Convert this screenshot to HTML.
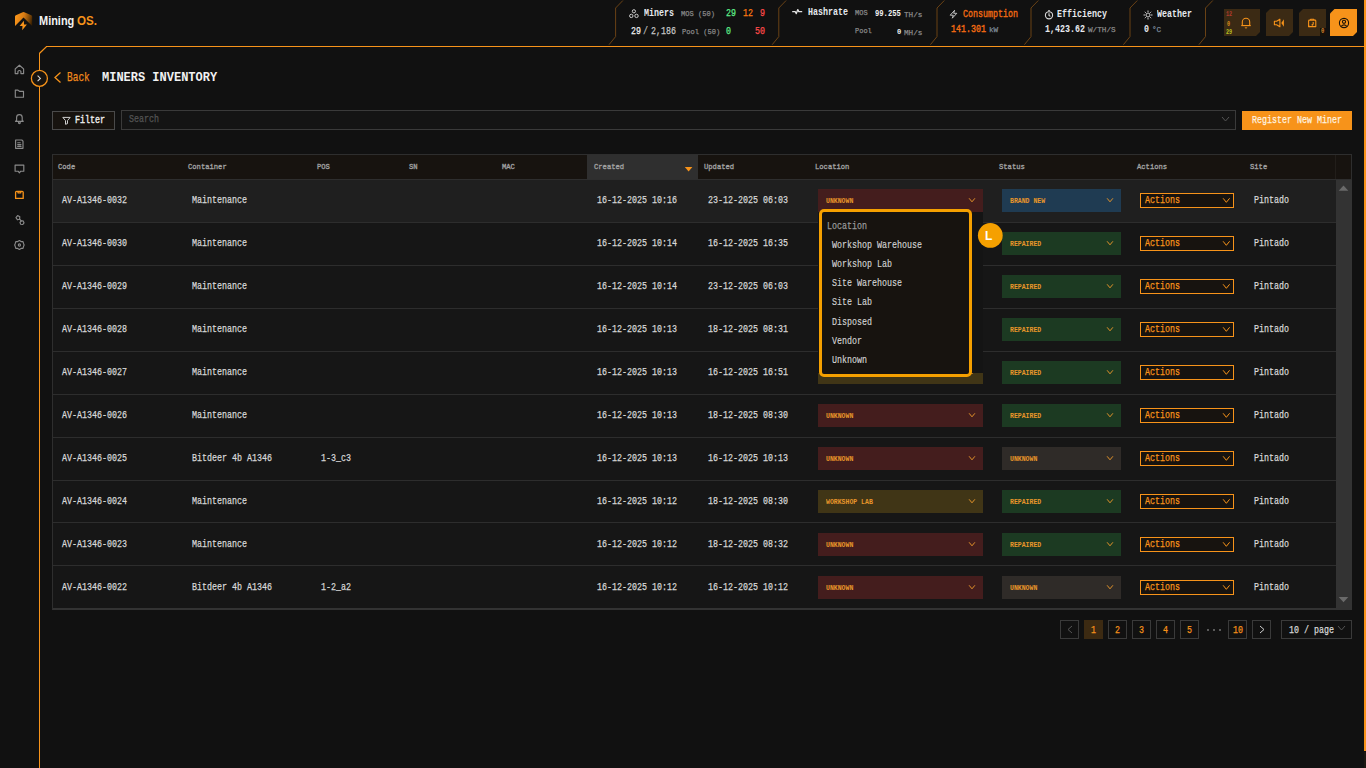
<!DOCTYPE html><html><head><meta charset="utf-8"><style>
html,body{margin:0;padding:0;}
body{width:1366px;height:768px;overflow:hidden;position:relative;background:#111111;font-family:"Liberation Mono",monospace;}
.t{position:absolute;white-space:pre;line-height:1;transform-origin:0 0;}
.r{position:absolute;box-sizing:border-box;}
</style></head><body>
<svg class="r" style="left:13px;top:10px;" width="22" height="22" viewBox="0 0 22 22"><defs><linearGradient id="lg" x1="0" y1="0.75" x2="1" y2="0.95"><stop offset="0" stop-color="#f7931a"/><stop offset="0.4" stop-color="#d87c14"/><stop offset="0.75" stop-color="#7a4608"/><stop offset="1" stop-color="#2a1700"/></linearGradient></defs>
<path d="M2 16 V6.6 Q2 5.7 2.9 5.3 L9.7 2.2 Q10.5 1.8 11.3 2.2 L18.3 5.3 Q19.2 5.7 19.2 6.6 V16 L10.5 7.5 Z" fill="url(#lg)"/>
<path d="M10.9 10.7 L6.6 15.9 L9.5 15.9 L9.2 20.3 L13.9 14.4 L11 14.4 Z" fill="#f7931a"/></svg>
<div class="t" style="left:39.00px;top:15.35px;font-size:12.60px;color:#f2f2f2;font-weight:700;transform:scaleX(0.870);font-family:'Liberation Sans',sans-serif;">Mining</div>
<div class="t" style="left:77.00px;top:15.35px;font-size:12.60px;color:#f7931a;font-weight:700;transform:scaleX(0.920);font-family:'Liberation Sans',sans-serif;">OS.</div>
<svg class="r" style="left:0px;top:0px;" width="1366" height="46" viewBox="0 0 1366 46"><path d="M622.9 0.5 L615.6 8 L615.6 36.6 L609.0 44.7" fill="none" stroke="#6a4215" stroke-width="1.0"/><path d="M786.0999999999999 0.5 L778.8 8 L778.8 36.6 L772.1999999999999 44.7" fill="none" stroke="#6a4215" stroke-width="1.0"/><path d="M944.3 0.5 L937 8 L937 36.6 L930.4 44.7" fill="none" stroke="#6a4215" stroke-width="1.0"/><path d="M1038.3 0.5 L1031 8 L1031 36.6 L1024.4 44.7" fill="none" stroke="#6a4215" stroke-width="1.0"/><path d="M1137.3 0.5 L1130 8 L1130 36.6 L1123.4 44.7" fill="none" stroke="#6a4215" stroke-width="1.0"/><path d="M1212.8 0.5 L1205.5 8 L1205.5 36.6 L1198.9 44.7" fill="none" stroke="#6a4215" stroke-width="1.0"/></svg>
<div class="r" style="left:46px;top:46px;width:1320px;height:1.3px;background:#f7931a"></div>
<div class="r" style="left:1364px;top:0px;width:2px;height:751px;background:#f7931a"></div>
<div class="r" style="left:1364px;top:752px;width:2px;height:16px;background:#1c1812"></div>
<div class="r" style="left:38.7px;top:53px;width:1.3px;height:715px;background:#f7931a"></div>
<svg class="r" style="left:36px;top:44px;" width="14" height="12" viewBox="0 0 14 12"><path d="M3.35 9.5 L10.5 2.6" stroke="#f7931a" stroke-width="1.3" fill="none"/></svg>
<svg class="r" style="left:627px;top:7px;" width="14" height="13" viewBox="0 0 14 13"><g fill="none" stroke="#cfcfcf" stroke-width="1"><circle cx="6.9" cy="4.3" r="1.6"/><circle cx="4.3" cy="8.9" r="1.7"/><circle cx="9.5" cy="8.9" r="1.7"/></g></svg>
<div class="t" style="left:644.20px;top:7.61px;font-size:11.08px;color:#e6e9ee;font-weight:700;transform:scaleX(0.752);font-family:'Liberation Mono',monospace;">Miners</div>
<div class="t" style="left:681.40px;top:9.74px;font-size:8.05px;color:#8a8a8a;font-weight:400;transform:scaleX(0.880);font-family:'Liberation Mono',monospace;-webkit-text-stroke:0.25px currentColor;">MOS (50)</div>
<div class="t" style="left:725.50px;top:7.86px;font-size:10.63px;color:#5ff08a;font-weight:400;transform:scaleX(0.784);font-family:'Liberation Mono',monospace;-webkit-text-stroke:0.25px currentColor;">29</div>
<div class="t" style="left:743.00px;top:7.86px;font-size:10.63px;color:#ff7a10;font-weight:400;transform:scaleX(0.784);font-family:'Liberation Mono',monospace;-webkit-text-stroke:0.25px currentColor;">12</div>
<div class="t" style="left:760.00px;top:7.86px;font-size:10.63px;color:#ff4a4a;font-weight:400;transform:scaleX(0.784);font-family:'Liberation Mono',monospace;-webkit-text-stroke:0.25px currentColor;">9</div>
<div class="t" style="left:630.60px;top:25.51px;font-size:11.08px;color:#f4f4f4;font-weight:400;transform:scaleX(0.752);font-family:'Liberation Mono',monospace;-webkit-text-stroke:0.25px currentColor;">29</div>
<div class="t" style="left:643.00px;top:25.51px;font-size:11.08px;color:#b8b8b8;font-weight:400;transform:scaleX(0.752);font-family:'Liberation Mono',monospace;-webkit-text-stroke:0.25px currentColor;">/</div>
<div class="t" style="left:650.80px;top:25.51px;font-size:11.08px;color:#c8c8c8;font-weight:400;transform:scaleX(0.752);font-family:'Liberation Mono',monospace;-webkit-text-stroke:0.25px currentColor;">2,186</div>
<div class="t" style="left:681.60px;top:28.14px;font-size:8.05px;color:#8a8a8a;font-weight:400;transform:scaleX(0.880);font-family:'Liberation Mono',monospace;-webkit-text-stroke:0.25px currentColor;">Pool (50)</div>
<div class="t" style="left:725.50px;top:25.86px;font-size:10.63px;color:#5ff08a;font-weight:400;transform:scaleX(0.784);font-family:'Liberation Mono',monospace;-webkit-text-stroke:0.25px currentColor;">0</div>
<div class="t" style="left:754.60px;top:25.86px;font-size:10.63px;color:#ff4a4a;font-weight:400;transform:scaleX(0.784);font-family:'Liberation Mono',monospace;-webkit-text-stroke:0.25px currentColor;">50</div>
<svg class="r" style="left:790px;top:6px;" width="14" height="12" viewBox="0 0 14 12"><path d="M2.2 5.6 H5.2 L6.3 7.6 L7.8 3.6 L8.8 5.6 H12.2" fill="none" stroke="#e0e0e0" stroke-width="1.3" stroke-linejoin="round"/></svg>
<div class="t" style="left:808.00px;top:6.79px;font-size:11.23px;color:#e6e9ee;font-weight:700;transform:scaleX(0.742);font-family:'Liberation Mono',monospace;">Hashrate</div>
<div class="t" style="left:855.00px;top:10.22px;font-size:7.29px;color:#8a8a8a;font-weight:400;transform:scaleX(0.961);font-family:'Liberation Mono',monospace;-webkit-text-stroke:0.25px currentColor;">MOS</div>
<div class="t" style="left:875.00px;top:9.60px;font-size:8.35px;color:#f2f2f2;font-weight:700;transform:scaleX(0.858);font-family:'Liberation Mono',monospace;">99.255</div>
<div class="t" style="left:904.30px;top:11.14px;font-size:8.05px;color:#8a8a8a;font-weight:400;transform:scaleX(0.953);font-family:'Liberation Mono',monospace;-webkit-text-stroke:0.25px currentColor;">TH/s</div>
<div class="t" style="left:855.00px;top:28.38px;font-size:7.59px;color:#8a8a8a;font-weight:400;transform:scaleX(0.922);font-family:'Liberation Mono',monospace;-webkit-text-stroke:0.25px currentColor;">Pool</div>
<div class="t" style="left:896.60px;top:29.18px;font-size:7.59px;color:#f2f2f2;font-weight:700;transform:scaleX(0.944);font-family:'Liberation Mono',monospace;">0</div>
<div class="t" style="left:904.30px;top:29.14px;font-size:8.05px;color:#8a8a8a;font-weight:400;transform:scaleX(0.953);font-family:'Liberation Mono',monospace;-webkit-text-stroke:0.25px currentColor;">MH/s</div>
<svg class="r" style="left:948px;top:9px;" width="11" height="11" viewBox="0 0 11 11"><path d="M6.6 1.3 L2.2 6.2 L5.3 6.2 L4.3 9.2 L8.8 4.3 L5.7 4.3 Z" fill="none" stroke="#d0d0d0" stroke-width="0.9" stroke-linejoin="round"/></svg>
<div class="t" style="left:962.50px;top:9.29px;font-size:10.32px;color:#f26b12;font-weight:400;transform:scaleX(0.807);font-family:'Liberation Mono',monospace;-webkit-text-stroke:0.35px currentColor;">Consumption</div>
<div class="t" style="left:951.00px;top:23.73px;font-size:10.93px;color:#f26b12;font-weight:400;transform:scaleX(0.762);font-family:'Liberation Mono',monospace;-webkit-text-stroke:0.4px currentColor;">141.301</div>
<div class="t" style="left:988.90px;top:26.14px;font-size:8.05px;color:#7d8a99;font-weight:400;transform:scaleX(0.953);font-family:'Liberation Mono',monospace;-webkit-text-stroke:0.25px currentColor;">kW</div>
<svg class="r" style="left:1044px;top:10px;" width="10" height="10" viewBox="0 0 10 10"><g fill="none" stroke="#d8d8d8" stroke-width="1.1"><circle cx="5" cy="5.3" r="3.6"/><path d="M5 3.3 L5 5.4 L6.4 6.4"/><path d="M4 0.8 L6 0.8"/></g></svg>
<div class="t" style="left:1057.40px;top:9.29px;font-size:10.32px;color:#e6e9ee;font-weight:700;transform:scaleX(0.807);font-family:'Liberation Mono',monospace;">Efficiency</div>
<div class="t" style="left:1045.00px;top:24.01px;font-size:11.08px;color:#e6e9ee;font-weight:700;transform:scaleX(0.752);font-family:'Liberation Mono',monospace;">1,423.62</div>
<div class="t" style="left:1088.00px;top:26.14px;font-size:8.05px;color:#8a8a8a;font-weight:400;transform:scaleX(0.953);font-family:'Liberation Mono',monospace;-webkit-text-stroke:0.25px currentColor;">W/TH/S</div>
<svg class="r" style="left:1143px;top:10px;" width="10" height="10" viewBox="0 0 10 10"><g fill="none" stroke="#cfcfcf" stroke-width="1"><circle cx="5" cy="5" r="2"/><path d="M5 0.5V2 M5 8V9.5 M0.5 5H2 M8 5H9.5 M1.8 1.8L2.8 2.8 M7.2 7.2L8.2 8.2 M1.8 8.2L2.8 7.2 M7.2 2.8L8.2 1.8"/></g></svg>
<div class="t" style="left:1157.00px;top:9.49px;font-size:10.32px;color:#e6e9ee;font-weight:700;transform:scaleX(0.807);font-family:'Liberation Mono',monospace;">Weather</div>
<div class="t" style="left:1144.00px;top:24.09px;font-size:10.32px;color:#e6e9ee;font-weight:700;transform:scaleX(0.807);font-family:'Liberation Mono',monospace;">0</div>
<div class="t" style="left:1152.40px;top:25.64px;font-size:8.05px;color:#7d8a99;font-weight:400;transform:scaleX(0.953);font-family:'Liberation Mono',monospace;-webkit-text-stroke:0.25px currentColor;">°C</div>
<svg class="r" style="left:1224px;top:9px;" width="36" height="27" viewBox="0 0 36 27"><polygon points="0,0 36,0 36,23 32,27 0,27 0,0" fill="#3b2a14"/></svg>
<div class="t" style="left:1225.80px;top:12.32px;font-size:6.38px;color:#b03a2e;font-weight:700;transform:scaleX(0.810);font-family:'Liberation Mono',monospace;">12</div>
<div class="t" style="left:1227.30px;top:21.52px;font-size:6.38px;color:#d88a1a;font-weight:700;transform:scaleX(0.810);font-family:'Liberation Mono',monospace;">0</div>
<div class="t" style="left:1225.80px;top:29.52px;font-size:6.38px;color:#b8c020;font-weight:700;transform:scaleX(0.810);font-family:'Liberation Mono',monospace;">29</div>
<svg class="r" style="left:1240px;top:16px;" width="12" height="13" viewBox="0 0 12 13"><g fill="none" stroke="#f7931a" stroke-width="1.1"><path d="M2.3 9.5 V6 A3.7 3.7 0 0 1 9.7 6 V9.5 Z"/><path d="M1.3 9.6 H10.7"/><path d="M5 11.5 Q6 12.6 7 11.5"/></g></svg>
<svg class="r" style="left:1266px;top:9px;" width="27" height="27" viewBox="0 0 27 27"><polygon points="4,0 27,0 27,23 23,27 0,27 0,4" fill="#3b2a14"/></svg>
<svg class="r" style="left:1272px;top:17px;" width="14" height="12" viewBox="0 0 14 12"><g fill="none" stroke="#f7931a" stroke-width="1.1" stroke-linejoin="round"><path d="M2.4 4.3 H4.6 L7.9 2.2 V9.8 L4.6 7.7 H2.4 Z"/></g><path d="M9.3 6 L11.9 2.3 V9.7 Z" fill="#f7931a"/></svg>
<svg class="r" style="left:1299px;top:9px;" width="27" height="27" viewBox="0 0 27 27"><polygon points="4,0 27,0 27,27 27,27 0,27 0,4" fill="#3b2a14"/></svg>
<svg class="r" style="left:1306px;top:17px;" width="12" height="12" viewBox="0 0 12 12"><g fill="none" stroke="#f7931a" stroke-width="1.1" stroke-linejoin="round"><path d="M2.6 4 Q2.6 3.1 3.5 3.1 H9 Q9.8 3.1 9.8 4 V9.6 H2.6 Z"/><path d="M4.6 3 V2.2 H7.8 V3"/><path d="M7.2 5 V7.6"/></g><circle cx="6.4" cy="7.8" r="0.9" fill="#f7931a"/><circle cx="3" cy="9.4" r="0.8" fill="#f7931a"/></svg>
<div class="r" style="left:1320px;top:28px;width:6px;height:8px;background:#17110a"></div>
<div class="t" style="left:1321.20px;top:29.32px;font-size:6.38px;color:#d0802a;font-weight:700;transform:scaleX(0.863);font-family:'Liberation Mono',monospace;">0</div>
<svg class="r" style="left:1330px;top:9px;" width="27" height="27" viewBox="0 0 27 27"><polygon points="4.5,0 27,0 27,23 23,27 0,27 0,4.5" fill="#f7931a"/></svg>
<svg class="r" style="left:1338px;top:17px;" width="12" height="12" viewBox="0 0 12 12"><g fill="none" stroke="#1a1208" stroke-width="1.1"><circle cx="6" cy="6" r="4.6"/><circle cx="6" cy="4.8" r="1.6"/><path d="M3.1 9.4 Q6 6.4 8.9 9.4"/></g></svg>
<svg class="r" style="left:0px;top:0px;" width="40" height="260" viewBox="0 0 40 260"><g fill="none" stroke="#8a8a8a" stroke-width="1.15" stroke-linejoin="round" stroke-linecap="round">
<path d="M15.2 73.6 V68.9 L19.4 65.2 L23.6 68.9 V73.6 H20.9 V71.3 Q19.4 69.6 17.9 71.3 V73.6 Z"/>
<path d="M15.3 97.2 V90.1 H18 L19.4 91.3 H23.5 V97.2 Z"/>
<path d="M16.6 120.6 V117.6 A2.8 2.9 0 0 1 22.2 117.6 V120.6 L23.3 121.3 H15.5 Z"/>
<circle cx="19.4" cy="122.7" r="0.9"/>
<path d="M15.6 140 H21.8 L23 141.2 V148.3 H15.6 Z"/>
<path d="M17.7 142.7 H20.3 M17.7 144.6 H21 M17.7 146.4 H21"/>
<path d="M15.1 165.1 H23.8 V171.2 H20.7 L19.4 172.9 L18.1 171.2 H15.1 Z"/>

<circle cx="19.4" cy="245" r="1.1"/>
<path d="M19.4 240.6 L21.1 241.6 L23 241.6 L23.5 243.4 L24.1 245 L23.5 246.6 L23 248.4 L21.1 248.4 L19.4 249.4 L17.7 248.4 L15.8 248.4 L15.3 246.6 L14.7 245 L15.3 243.4 L15.8 241.6 L17.7 241.6 Z" />
<path d="M16 217.6 L17.6 215.6 L19.8 216.8 L19.6 219.2 L17.4 219.8 Z"/>
<path d="M19.6 219.2 L21.4 221"/>
<path d="M21 221 L23 220.8 L24 222.8 L22.8 224.5 L20.6 224.2 L20 222.3 Z"/>
</g>
<g fill="none" stroke="#f7931a" stroke-width="1.3" stroke-linejoin="round">
<path d="M15.6 192.3 Q15.6 191.3 16.6 191.3 H22.2 Q23.2 191.3 23.2 192.3 V198.4 H15.6 Z"/>
<path d="M18 191.3 V192.8 H20.8 V191.3"/>
</g></svg>
<svg class="r" style="left:29px;top:68px;" width="21" height="21" viewBox="0 0 21 21"><circle cx="10.4" cy="10.4" r="8" fill="#17130f" stroke="#f7931a" stroke-width="1.3"/><path d="M8.6 7.6 L11.4 10.4 L8.6 13.2" fill="none" stroke="#d8d8d8" stroke-width="1.1"/></svg>
<svg class="r" style="left:52px;top:70px;" width="12" height="14" viewBox="0 0 12 14"><path d="M8.5 2.5 L3 7.5 L8.5 12.5" fill="none" stroke="#f7931a" stroke-width="1.3"/></svg>
<div class="t" style="left:66.80px;top:71.55px;font-size:12.60px;color:#f08a1c;font-weight:400;transform:scaleX(0.754);font-family:'Liberation Mono',monospace;-webkit-text-stroke:0.25px currentColor;">Back</div>
<div class="t" style="left:101.50px;top:71.55px;font-size:12.60px;color:#f2f2f2;font-weight:700;transform:scaleX(0.952);font-family:'Liberation Mono',monospace;">MINERS INVENTORY</div>
<div class="r" style="left:52px;top:111px;width:63px;height:19px;background:#17130f;border:1px solid #4a4a4a"></div>
<svg class="r" style="left:61px;top:114px;" width="11" height="12" viewBox="0 0 11 12"><g fill="none" stroke="#d0d0d0" stroke-width="1"><path d="M1.8 3.4 H9.2 L6.5 6.6 V9.6 L4.5 10.3 V6.6 Z"/></g></svg>
<div class="t" style="left:74.70px;top:114.86px;font-size:10.63px;color:#ececec;font-weight:400;transform:scaleX(0.784);font-family:'Liberation Mono',monospace;-webkit-text-stroke:0.4px currentColor;">Filter</div>
<div class="r" style="left:121px;top:110px;width:1115px;height:20px;background:#141414;border:1px solid #3a3a3a"></div>
<div class="t" style="left:128.90px;top:114.06px;font-size:10.63px;color:#555555;font-weight:400;transform:scaleX(0.784);font-family:'Liberation Mono',monospace;-webkit-text-stroke:0.25px currentColor;">Search</div>
<svg class="r" style="left:1221px;top:115px;" width="9" height="8" viewBox="0 0 9 8"><path d="M1 2 L4.5 6 L8 2" fill="none" stroke="#555" stroke-width="1"/></svg>
<div class="r" style="left:1242px;top:111px;width:110px;height:19px;background:#f7931a"></div>
<div class="t" style="left:1251.60px;top:114.96px;font-size:10.63px;color:#fff3e0;font-weight:400;transform:scaleX(0.784);font-family:'Liberation Mono',monospace;-webkit-text-stroke:0.25px currentColor;">Register New Miner</div>
<div class="r" style="left:52px;top:154px;width:1300px;height:456px;border:1px solid #2e2e2e;border-bottom:2px solid #333;background:#161616"></div>
<div class="r" style="left:53px;top:155px;width:1298px;height:24px;background:#17130f"></div>
<div class="r" style="left:587px;top:155px;width:111px;height:24px;background:#2f2f2f"></div>
<div class="r" style="left:53px;top:179px;width:1298px;height:1px;background:#2e2e2e"></div>
<div class="r" style="left:1335px;top:155px;width:1px;height:24px;background:#221e1a"></div>
<svg class="r" style="left:684px;top:166px;" width="10" height="7" viewBox="0 0 10 7"><path d="M0.8 0.9 H8.4 L4.6 5.4 Z" fill="#f7931a"/></svg>
<div class="t" style="left:58.40px;top:162.84px;font-size:8.05px;color:#a0a0a0;font-weight:400;transform:scaleX(0.891);font-family:'Liberation Mono',monospace;-webkit-text-stroke:0.35px currentColor;">Code</div>
<div class="t" style="left:188.20px;top:162.84px;font-size:8.05px;color:#a0a0a0;font-weight:400;transform:scaleX(0.891);font-family:'Liberation Mono',monospace;-webkit-text-stroke:0.35px currentColor;">Container</div>
<div class="t" style="left:317.00px;top:162.84px;font-size:8.05px;color:#a0a0a0;font-weight:400;transform:scaleX(0.891);font-family:'Liberation Mono',monospace;-webkit-text-stroke:0.35px currentColor;">POS</div>
<div class="t" style="left:409.00px;top:162.84px;font-size:8.05px;color:#a0a0a0;font-weight:400;transform:scaleX(0.891);font-family:'Liberation Mono',monospace;-webkit-text-stroke:0.35px currentColor;">SN</div>
<div class="t" style="left:501.50px;top:162.84px;font-size:8.05px;color:#a0a0a0;font-weight:400;transform:scaleX(0.891);font-family:'Liberation Mono',monospace;-webkit-text-stroke:0.35px currentColor;">MAC</div>
<div class="t" style="left:593.80px;top:162.84px;font-size:8.05px;color:#a0a0a0;font-weight:400;transform:scaleX(0.891);font-family:'Liberation Mono',monospace;-webkit-text-stroke:0.35px currentColor;">Created</div>
<div class="t" style="left:704.00px;top:162.84px;font-size:8.05px;color:#a0a0a0;font-weight:400;transform:scaleX(0.891);font-family:'Liberation Mono',monospace;-webkit-text-stroke:0.35px currentColor;">Updated</div>
<div class="t" style="left:815.00px;top:162.84px;font-size:8.05px;color:#a0a0a0;font-weight:400;transform:scaleX(0.891);font-family:'Liberation Mono',monospace;-webkit-text-stroke:0.35px currentColor;">Location</div>
<div class="t" style="left:998.80px;top:162.84px;font-size:8.05px;color:#a0a0a0;font-weight:400;transform:scaleX(0.891);font-family:'Liberation Mono',monospace;-webkit-text-stroke:0.35px currentColor;">Status</div>
<div class="t" style="left:1137.00px;top:162.84px;font-size:8.05px;color:#a0a0a0;font-weight:400;transform:scaleX(0.891);font-family:'Liberation Mono',monospace;-webkit-text-stroke:0.35px currentColor;">Actions</div>
<div class="t" style="left:1250.00px;top:162.84px;font-size:8.05px;color:#a0a0a0;font-weight:400;transform:scaleX(0.891);font-family:'Liberation Mono',monospace;-webkit-text-stroke:0.35px currentColor;">Site</div>
<div class="r" style="left:53px;top:180px;width:1283px;height:42px;background:#1f1f1f"></div>
<div class="r" style="left:53px;top:222px;width:1283px;height:1px;background:#2d2d2d"></div>
<div class="t" style="left:62.30px;top:194.86px;font-size:10.63px;color:#d8d8d8;font-weight:400;transform:scaleX(0.784);font-family:'Liberation Mono',monospace;-webkit-text-stroke:0.25px currentColor;">AV-A1346-0032</div>
<div class="t" style="left:192.00px;top:194.86px;font-size:10.63px;color:#d8d8d8;font-weight:400;transform:scaleX(0.784);font-family:'Liberation Mono',monospace;-webkit-text-stroke:0.25px currentColor;">Maintenance</div>
<div class="t" style="left:597.00px;top:194.86px;font-size:10.63px;color:#d8d8d8;font-weight:400;transform:scaleX(0.784);font-family:'Liberation Mono',monospace;-webkit-text-stroke:0.25px currentColor;">16-12-2025 10:16</div>
<div class="t" style="left:707.70px;top:194.86px;font-size:10.63px;color:#d8d8d8;font-weight:400;transform:scaleX(0.784);font-family:'Liberation Mono',monospace;-webkit-text-stroke:0.25px currentColor;">23-12-2025 06:03</div>
<div class="r" style="left:818px;top:189px;width:165px;height:23px;background:#441d1d"></div>
<div class="t" style="left:825.50px;top:197.14px;font-size:8.05px;color:#e8962a;font-weight:700;transform:scaleX(0.808);font-family:'Liberation Mono',monospace;">UNKNOWN</div>
<svg class="r" style="left:968px;top:197px;" width="8.8" height="7" viewBox="0 0 8.8 7"><path d="M1.1 1.3 L4.0 4.8 L6.9 1.3" fill="none" stroke="#e8962a" stroke-width="0.95"/></svg>
<div class="r" style="left:1002px;top:189px;width:119px;height:23px;background:#1f3b52"></div>
<div class="t" style="left:1009.60px;top:197.14px;font-size:8.05px;color:#e8962a;font-weight:700;transform:scaleX(0.808);font-family:'Liberation Mono',monospace;">BRAND NEW</div>
<svg class="r" style="left:1106px;top:197px;" width="8.8" height="7" viewBox="0 0 8.8 7"><path d="M1.1 1.3 L4.0 4.8 L6.9 1.3" fill="none" stroke="#e8962a" stroke-width="0.95"/></svg>
<div class="r" style="left:1140px;top:193px;width:94px;height:15px;background:#17130f;border:1.5px solid #f7931a"></div>
<div class="t" style="left:1144.80px;top:195.36px;font-size:10.63px;color:#f7931a;font-weight:400;transform:scaleX(0.784);font-family:'Liberation Mono',monospace;-webkit-text-stroke:0.25px currentColor;">Actions</div>
<svg class="r" style="left:1222px;top:197px;" width="9.5" height="8" viewBox="0 0 9.5 8"><path d="M1.1 1.3 L4.35 5.3 L7.6 1.3" fill="none" stroke="#f7931a" stroke-width="1.0"/></svg>
<div class="t" style="left:1253.80px;top:194.86px;font-size:10.63px;color:#d8d8d8;font-weight:400;transform:scaleX(0.784);font-family:'Liberation Mono',monospace;-webkit-text-stroke:0.25px currentColor;">Pintado</div>
<div class="r" style="left:53px;top:223px;width:1283px;height:42px;background:#161616"></div>
<div class="r" style="left:53px;top:265px;width:1283px;height:1px;background:#2d2d2d"></div>
<div class="t" style="left:62.30px;top:237.86px;font-size:10.63px;color:#d8d8d8;font-weight:400;transform:scaleX(0.784);font-family:'Liberation Mono',monospace;-webkit-text-stroke:0.25px currentColor;">AV-A1346-0030</div>
<div class="t" style="left:192.00px;top:237.86px;font-size:10.63px;color:#d8d8d8;font-weight:400;transform:scaleX(0.784);font-family:'Liberation Mono',monospace;-webkit-text-stroke:0.25px currentColor;">Maintenance</div>
<div class="t" style="left:597.00px;top:237.86px;font-size:10.63px;color:#d8d8d8;font-weight:400;transform:scaleX(0.784);font-family:'Liberation Mono',monospace;-webkit-text-stroke:0.25px currentColor;">16-12-2025 10:14</div>
<div class="t" style="left:707.70px;top:237.86px;font-size:10.63px;color:#d8d8d8;font-weight:400;transform:scaleX(0.784);font-family:'Liberation Mono',monospace;-webkit-text-stroke:0.25px currentColor;">16-12-2025 16:35</div>
<div class="r" style="left:818px;top:232px;width:165px;height:23px;background:#441d1d"></div>
<div class="t" style="left:825.50px;top:240.14px;font-size:8.05px;color:#e8962a;font-weight:700;transform:scaleX(0.808);font-family:'Liberation Mono',monospace;">UNKNOWN</div>
<svg class="r" style="left:968px;top:240px;" width="8.8" height="7" viewBox="0 0 8.8 7"><path d="M1.1 1.3 L4.0 4.8 L6.9 1.3" fill="none" stroke="#e8962a" stroke-width="0.95"/></svg>
<div class="r" style="left:1002px;top:232px;width:119px;height:23px;background:#1c3a22"></div>
<div class="t" style="left:1009.60px;top:240.14px;font-size:8.05px;color:#e8962a;font-weight:700;transform:scaleX(0.808);font-family:'Liberation Mono',monospace;">REPAIRED</div>
<svg class="r" style="left:1106px;top:240px;" width="8.8" height="7" viewBox="0 0 8.8 7"><path d="M1.1 1.3 L4.0 4.8 L6.9 1.3" fill="none" stroke="#e8962a" stroke-width="0.95"/></svg>
<div class="r" style="left:1140px;top:236px;width:94px;height:15px;background:#17130f;border:1.5px solid #f7931a"></div>
<div class="t" style="left:1144.80px;top:238.36px;font-size:10.63px;color:#f7931a;font-weight:400;transform:scaleX(0.784);font-family:'Liberation Mono',monospace;-webkit-text-stroke:0.25px currentColor;">Actions</div>
<svg class="r" style="left:1222px;top:240px;" width="9.5" height="8" viewBox="0 0 9.5 8"><path d="M1.1 1.3 L4.35 5.3 L7.6 1.3" fill="none" stroke="#f7931a" stroke-width="1.0"/></svg>
<div class="t" style="left:1253.80px;top:237.86px;font-size:10.63px;color:#d8d8d8;font-weight:400;transform:scaleX(0.784);font-family:'Liberation Mono',monospace;-webkit-text-stroke:0.25px currentColor;">Pintado</div>
<div class="r" style="left:53px;top:266px;width:1283px;height:42px;background:#161616"></div>
<div class="r" style="left:53px;top:308px;width:1283px;height:1px;background:#2d2d2d"></div>
<div class="t" style="left:62.30px;top:280.86px;font-size:10.63px;color:#d8d8d8;font-weight:400;transform:scaleX(0.784);font-family:'Liberation Mono',monospace;-webkit-text-stroke:0.25px currentColor;">AV-A1346-0029</div>
<div class="t" style="left:192.00px;top:280.86px;font-size:10.63px;color:#d8d8d8;font-weight:400;transform:scaleX(0.784);font-family:'Liberation Mono',monospace;-webkit-text-stroke:0.25px currentColor;">Maintenance</div>
<div class="t" style="left:597.00px;top:280.86px;font-size:10.63px;color:#d8d8d8;font-weight:400;transform:scaleX(0.784);font-family:'Liberation Mono',monospace;-webkit-text-stroke:0.25px currentColor;">16-12-2025 10:14</div>
<div class="t" style="left:707.70px;top:280.86px;font-size:10.63px;color:#d8d8d8;font-weight:400;transform:scaleX(0.784);font-family:'Liberation Mono',monospace;-webkit-text-stroke:0.25px currentColor;">23-12-2025 06:03</div>
<div class="r" style="left:818px;top:275px;width:165px;height:23px;background:#441d1d"></div>
<div class="t" style="left:825.50px;top:283.14px;font-size:8.05px;color:#e8962a;font-weight:700;transform:scaleX(0.808);font-family:'Liberation Mono',monospace;">UNKNOWN</div>
<svg class="r" style="left:968px;top:283px;" width="8.8" height="7" viewBox="0 0 8.8 7"><path d="M1.1 1.3 L4.0 4.8 L6.9 1.3" fill="none" stroke="#e8962a" stroke-width="0.95"/></svg>
<div class="r" style="left:1002px;top:275px;width:119px;height:23px;background:#1c3a22"></div>
<div class="t" style="left:1009.60px;top:283.14px;font-size:8.05px;color:#e8962a;font-weight:700;transform:scaleX(0.808);font-family:'Liberation Mono',monospace;">REPAIRED</div>
<svg class="r" style="left:1106px;top:283px;" width="8.8" height="7" viewBox="0 0 8.8 7"><path d="M1.1 1.3 L4.0 4.8 L6.9 1.3" fill="none" stroke="#e8962a" stroke-width="0.95"/></svg>
<div class="r" style="left:1140px;top:279px;width:94px;height:15px;background:#17130f;border:1.5px solid #f7931a"></div>
<div class="t" style="left:1144.80px;top:281.36px;font-size:10.63px;color:#f7931a;font-weight:400;transform:scaleX(0.784);font-family:'Liberation Mono',monospace;-webkit-text-stroke:0.25px currentColor;">Actions</div>
<svg class="r" style="left:1222px;top:283px;" width="9.5" height="8" viewBox="0 0 9.5 8"><path d="M1.1 1.3 L4.35 5.3 L7.6 1.3" fill="none" stroke="#f7931a" stroke-width="1.0"/></svg>
<div class="t" style="left:1253.80px;top:280.86px;font-size:10.63px;color:#d8d8d8;font-weight:400;transform:scaleX(0.784);font-family:'Liberation Mono',monospace;-webkit-text-stroke:0.25px currentColor;">Pintado</div>
<div class="r" style="left:53px;top:309px;width:1283px;height:42px;background:#161616"></div>
<div class="r" style="left:53px;top:351px;width:1283px;height:1px;background:#2d2d2d"></div>
<div class="t" style="left:62.30px;top:323.86px;font-size:10.63px;color:#d8d8d8;font-weight:400;transform:scaleX(0.784);font-family:'Liberation Mono',monospace;-webkit-text-stroke:0.25px currentColor;">AV-A1346-0028</div>
<div class="t" style="left:192.00px;top:323.86px;font-size:10.63px;color:#d8d8d8;font-weight:400;transform:scaleX(0.784);font-family:'Liberation Mono',monospace;-webkit-text-stroke:0.25px currentColor;">Maintenance</div>
<div class="t" style="left:597.00px;top:323.86px;font-size:10.63px;color:#d8d8d8;font-weight:400;transform:scaleX(0.784);font-family:'Liberation Mono',monospace;-webkit-text-stroke:0.25px currentColor;">16-12-2025 10:13</div>
<div class="t" style="left:707.70px;top:323.86px;font-size:10.63px;color:#d8d8d8;font-weight:400;transform:scaleX(0.784);font-family:'Liberation Mono',monospace;-webkit-text-stroke:0.25px currentColor;">18-12-2025 08:31</div>
<div class="r" style="left:818px;top:318px;width:165px;height:23px;background:#441d1d"></div>
<div class="t" style="left:825.50px;top:326.14px;font-size:8.05px;color:#e8962a;font-weight:700;transform:scaleX(0.808);font-family:'Liberation Mono',monospace;">UNKNOWN</div>
<svg class="r" style="left:968px;top:326px;" width="8.8" height="7" viewBox="0 0 8.8 7"><path d="M1.1 1.3 L4.0 4.8 L6.9 1.3" fill="none" stroke="#e8962a" stroke-width="0.95"/></svg>
<div class="r" style="left:1002px;top:318px;width:119px;height:23px;background:#1c3a22"></div>
<div class="t" style="left:1009.60px;top:326.14px;font-size:8.05px;color:#e8962a;font-weight:700;transform:scaleX(0.808);font-family:'Liberation Mono',monospace;">REPAIRED</div>
<svg class="r" style="left:1106px;top:326px;" width="8.8" height="7" viewBox="0 0 8.8 7"><path d="M1.1 1.3 L4.0 4.8 L6.9 1.3" fill="none" stroke="#e8962a" stroke-width="0.95"/></svg>
<div class="r" style="left:1140px;top:322px;width:94px;height:15px;background:#17130f;border:1.5px solid #f7931a"></div>
<div class="t" style="left:1144.80px;top:324.36px;font-size:10.63px;color:#f7931a;font-weight:400;transform:scaleX(0.784);font-family:'Liberation Mono',monospace;-webkit-text-stroke:0.25px currentColor;">Actions</div>
<svg class="r" style="left:1222px;top:326px;" width="9.5" height="8" viewBox="0 0 9.5 8"><path d="M1.1 1.3 L4.35 5.3 L7.6 1.3" fill="none" stroke="#f7931a" stroke-width="1.0"/></svg>
<div class="t" style="left:1253.80px;top:323.86px;font-size:10.63px;color:#d8d8d8;font-weight:400;transform:scaleX(0.784);font-family:'Liberation Mono',monospace;-webkit-text-stroke:0.25px currentColor;">Pintado</div>
<div class="r" style="left:53px;top:352px;width:1283px;height:42px;background:#161616"></div>
<div class="r" style="left:53px;top:394px;width:1283px;height:1px;background:#2d2d2d"></div>
<div class="t" style="left:62.30px;top:366.86px;font-size:10.63px;color:#d8d8d8;font-weight:400;transform:scaleX(0.784);font-family:'Liberation Mono',monospace;-webkit-text-stroke:0.25px currentColor;">AV-A1346-0027</div>
<div class="t" style="left:192.00px;top:366.86px;font-size:10.63px;color:#d8d8d8;font-weight:400;transform:scaleX(0.784);font-family:'Liberation Mono',monospace;-webkit-text-stroke:0.25px currentColor;">Maintenance</div>
<div class="t" style="left:597.00px;top:366.86px;font-size:10.63px;color:#d8d8d8;font-weight:400;transform:scaleX(0.784);font-family:'Liberation Mono',monospace;-webkit-text-stroke:0.25px currentColor;">16-12-2025 10:13</div>
<div class="t" style="left:707.70px;top:366.86px;font-size:10.63px;color:#d8d8d8;font-weight:400;transform:scaleX(0.784);font-family:'Liberation Mono',monospace;-webkit-text-stroke:0.25px currentColor;">16-12-2025 16:51</div>
<div class="r" style="left:818px;top:361px;width:165px;height:23px;background:#403516"></div>
<div class="t" style="left:825.50px;top:369.14px;font-size:8.05px;color:#e8962a;font-weight:700;transform:scaleX(0.808);font-family:'Liberation Mono',monospace;">WORKSHOP WAREHOUSE</div>
<svg class="r" style="left:968px;top:369px;" width="8.8" height="7" viewBox="0 0 8.8 7"><path d="M1.1 1.3 L4.0 4.8 L6.9 1.3" fill="none" stroke="#e8962a" stroke-width="0.95"/></svg>
<div class="r" style="left:1002px;top:361px;width:119px;height:23px;background:#1c3a22"></div>
<div class="t" style="left:1009.60px;top:369.14px;font-size:8.05px;color:#e8962a;font-weight:700;transform:scaleX(0.808);font-family:'Liberation Mono',monospace;">REPAIRED</div>
<svg class="r" style="left:1106px;top:369px;" width="8.8" height="7" viewBox="0 0 8.8 7"><path d="M1.1 1.3 L4.0 4.8 L6.9 1.3" fill="none" stroke="#e8962a" stroke-width="0.95"/></svg>
<div class="r" style="left:1140px;top:365px;width:94px;height:15px;background:#17130f;border:1.5px solid #f7931a"></div>
<div class="t" style="left:1144.80px;top:367.36px;font-size:10.63px;color:#f7931a;font-weight:400;transform:scaleX(0.784);font-family:'Liberation Mono',monospace;-webkit-text-stroke:0.25px currentColor;">Actions</div>
<svg class="r" style="left:1222px;top:369px;" width="9.5" height="8" viewBox="0 0 9.5 8"><path d="M1.1 1.3 L4.35 5.3 L7.6 1.3" fill="none" stroke="#f7931a" stroke-width="1.0"/></svg>
<div class="t" style="left:1253.80px;top:366.86px;font-size:10.63px;color:#d8d8d8;font-weight:400;transform:scaleX(0.784);font-family:'Liberation Mono',monospace;-webkit-text-stroke:0.25px currentColor;">Pintado</div>
<div class="r" style="left:53px;top:395px;width:1283px;height:42px;background:#161616"></div>
<div class="r" style="left:53px;top:437px;width:1283px;height:1px;background:#2d2d2d"></div>
<div class="t" style="left:62.30px;top:409.86px;font-size:10.63px;color:#d8d8d8;font-weight:400;transform:scaleX(0.784);font-family:'Liberation Mono',monospace;-webkit-text-stroke:0.25px currentColor;">AV-A1346-0026</div>
<div class="t" style="left:192.00px;top:409.86px;font-size:10.63px;color:#d8d8d8;font-weight:400;transform:scaleX(0.784);font-family:'Liberation Mono',monospace;-webkit-text-stroke:0.25px currentColor;">Maintenance</div>
<div class="t" style="left:597.00px;top:409.86px;font-size:10.63px;color:#d8d8d8;font-weight:400;transform:scaleX(0.784);font-family:'Liberation Mono',monospace;-webkit-text-stroke:0.25px currentColor;">16-12-2025 10:13</div>
<div class="t" style="left:707.70px;top:409.86px;font-size:10.63px;color:#d8d8d8;font-weight:400;transform:scaleX(0.784);font-family:'Liberation Mono',monospace;-webkit-text-stroke:0.25px currentColor;">18-12-2025 08:30</div>
<div class="r" style="left:818px;top:404px;width:165px;height:23px;background:#441d1d"></div>
<div class="t" style="left:825.50px;top:412.14px;font-size:8.05px;color:#e8962a;font-weight:700;transform:scaleX(0.808);font-family:'Liberation Mono',monospace;">UNKNOWN</div>
<svg class="r" style="left:968px;top:412px;" width="8.8" height="7" viewBox="0 0 8.8 7"><path d="M1.1 1.3 L4.0 4.8 L6.9 1.3" fill="none" stroke="#e8962a" stroke-width="0.95"/></svg>
<div class="r" style="left:1002px;top:404px;width:119px;height:23px;background:#1c3a22"></div>
<div class="t" style="left:1009.60px;top:412.14px;font-size:8.05px;color:#e8962a;font-weight:700;transform:scaleX(0.808);font-family:'Liberation Mono',monospace;">REPAIRED</div>
<svg class="r" style="left:1106px;top:412px;" width="8.8" height="7" viewBox="0 0 8.8 7"><path d="M1.1 1.3 L4.0 4.8 L6.9 1.3" fill="none" stroke="#e8962a" stroke-width="0.95"/></svg>
<div class="r" style="left:1140px;top:408px;width:94px;height:15px;background:#17130f;border:1.5px solid #f7931a"></div>
<div class="t" style="left:1144.80px;top:410.36px;font-size:10.63px;color:#f7931a;font-weight:400;transform:scaleX(0.784);font-family:'Liberation Mono',monospace;-webkit-text-stroke:0.25px currentColor;">Actions</div>
<svg class="r" style="left:1222px;top:412px;" width="9.5" height="8" viewBox="0 0 9.5 8"><path d="M1.1 1.3 L4.35 5.3 L7.6 1.3" fill="none" stroke="#f7931a" stroke-width="1.0"/></svg>
<div class="t" style="left:1253.80px;top:409.86px;font-size:10.63px;color:#d8d8d8;font-weight:400;transform:scaleX(0.784);font-family:'Liberation Mono',monospace;-webkit-text-stroke:0.25px currentColor;">Pintado</div>
<div class="r" style="left:53px;top:438px;width:1283px;height:42px;background:#161616"></div>
<div class="r" style="left:53px;top:480px;width:1283px;height:1px;background:#2d2d2d"></div>
<div class="t" style="left:62.30px;top:452.86px;font-size:10.63px;color:#d8d8d8;font-weight:400;transform:scaleX(0.784);font-family:'Liberation Mono',monospace;-webkit-text-stroke:0.25px currentColor;">AV-A1346-0025</div>
<div class="t" style="left:192.00px;top:452.86px;font-size:10.63px;color:#d8d8d8;font-weight:400;transform:scaleX(0.784);font-family:'Liberation Mono',monospace;-webkit-text-stroke:0.25px currentColor;">Bitdeer 4b A1346</div>
<div class="t" style="left:320.60px;top:452.86px;font-size:10.63px;color:#d8d8d8;font-weight:400;transform:scaleX(0.784);font-family:'Liberation Mono',monospace;-webkit-text-stroke:0.25px currentColor;">1-3_c3</div>
<div class="t" style="left:597.00px;top:452.86px;font-size:10.63px;color:#d8d8d8;font-weight:400;transform:scaleX(0.784);font-family:'Liberation Mono',monospace;-webkit-text-stroke:0.25px currentColor;">16-12-2025 10:13</div>
<div class="t" style="left:707.70px;top:452.86px;font-size:10.63px;color:#d8d8d8;font-weight:400;transform:scaleX(0.784);font-family:'Liberation Mono',monospace;-webkit-text-stroke:0.25px currentColor;">16-12-2025 10:13</div>
<div class="r" style="left:818px;top:447px;width:165px;height:23px;background:#441d1d"></div>
<div class="t" style="left:825.50px;top:455.14px;font-size:8.05px;color:#e8962a;font-weight:700;transform:scaleX(0.808);font-family:'Liberation Mono',monospace;">UNKNOWN</div>
<svg class="r" style="left:968px;top:455px;" width="8.8" height="7" viewBox="0 0 8.8 7"><path d="M1.1 1.3 L4.0 4.8 L6.9 1.3" fill="none" stroke="#e8962a" stroke-width="0.95"/></svg>
<div class="r" style="left:1002px;top:447px;width:119px;height:23px;background:#2f2b28"></div>
<div class="t" style="left:1009.60px;top:455.14px;font-size:8.05px;color:#e8962a;font-weight:700;transform:scaleX(0.808);font-family:'Liberation Mono',monospace;">UNKNOWN</div>
<svg class="r" style="left:1106px;top:455px;" width="8.8" height="7" viewBox="0 0 8.8 7"><path d="M1.1 1.3 L4.0 4.8 L6.9 1.3" fill="none" stroke="#e8962a" stroke-width="0.95"/></svg>
<div class="r" style="left:1140px;top:451px;width:94px;height:15px;background:#17130f;border:1.5px solid #f7931a"></div>
<div class="t" style="left:1144.80px;top:453.36px;font-size:10.63px;color:#f7931a;font-weight:400;transform:scaleX(0.784);font-family:'Liberation Mono',monospace;-webkit-text-stroke:0.25px currentColor;">Actions</div>
<svg class="r" style="left:1222px;top:455px;" width="9.5" height="8" viewBox="0 0 9.5 8"><path d="M1.1 1.3 L4.35 5.3 L7.6 1.3" fill="none" stroke="#f7931a" stroke-width="1.0"/></svg>
<div class="t" style="left:1253.80px;top:452.86px;font-size:10.63px;color:#d8d8d8;font-weight:400;transform:scaleX(0.784);font-family:'Liberation Mono',monospace;-webkit-text-stroke:0.25px currentColor;">Pintado</div>
<div class="r" style="left:53px;top:481px;width:1283px;height:41px;background:#161616"></div>
<div class="r" style="left:53px;top:522px;width:1283px;height:1px;background:#2d2d2d"></div>
<div class="t" style="left:62.30px;top:495.86px;font-size:10.63px;color:#d8d8d8;font-weight:400;transform:scaleX(0.784);font-family:'Liberation Mono',monospace;-webkit-text-stroke:0.25px currentColor;">AV-A1346-0024</div>
<div class="t" style="left:192.00px;top:495.86px;font-size:10.63px;color:#d8d8d8;font-weight:400;transform:scaleX(0.784);font-family:'Liberation Mono',monospace;-webkit-text-stroke:0.25px currentColor;">Maintenance</div>
<div class="t" style="left:597.00px;top:495.86px;font-size:10.63px;color:#d8d8d8;font-weight:400;transform:scaleX(0.784);font-family:'Liberation Mono',monospace;-webkit-text-stroke:0.25px currentColor;">16-12-2025 10:12</div>
<div class="t" style="left:707.70px;top:495.86px;font-size:10.63px;color:#d8d8d8;font-weight:400;transform:scaleX(0.784);font-family:'Liberation Mono',monospace;-webkit-text-stroke:0.25px currentColor;">18-12-2025 08:30</div>
<div class="r" style="left:818px;top:490px;width:165px;height:23px;background:#403516"></div>
<div class="t" style="left:825.50px;top:498.14px;font-size:8.05px;color:#e8962a;font-weight:700;transform:scaleX(0.808);font-family:'Liberation Mono',monospace;">WORKSHOP LAB</div>
<svg class="r" style="left:968px;top:498px;" width="8.8" height="7" viewBox="0 0 8.8 7"><path d="M1.1 1.3 L4.0 4.8 L6.9 1.3" fill="none" stroke="#e8962a" stroke-width="0.95"/></svg>
<div class="r" style="left:1002px;top:490px;width:119px;height:23px;background:#1c3a22"></div>
<div class="t" style="left:1009.60px;top:498.14px;font-size:8.05px;color:#e8962a;font-weight:700;transform:scaleX(0.808);font-family:'Liberation Mono',monospace;">REPAIRED</div>
<svg class="r" style="left:1106px;top:498px;" width="8.8" height="7" viewBox="0 0 8.8 7"><path d="M1.1 1.3 L4.0 4.8 L6.9 1.3" fill="none" stroke="#e8962a" stroke-width="0.95"/></svg>
<div class="r" style="left:1140px;top:494px;width:94px;height:15px;background:#17130f;border:1.5px solid #f7931a"></div>
<div class="t" style="left:1144.80px;top:496.36px;font-size:10.63px;color:#f7931a;font-weight:400;transform:scaleX(0.784);font-family:'Liberation Mono',monospace;-webkit-text-stroke:0.25px currentColor;">Actions</div>
<svg class="r" style="left:1222px;top:498px;" width="9.5" height="8" viewBox="0 0 9.5 8"><path d="M1.1 1.3 L4.35 5.3 L7.6 1.3" fill="none" stroke="#f7931a" stroke-width="1.0"/></svg>
<div class="t" style="left:1253.80px;top:495.86px;font-size:10.63px;color:#d8d8d8;font-weight:400;transform:scaleX(0.784);font-family:'Liberation Mono',monospace;-webkit-text-stroke:0.25px currentColor;">Pintado</div>
<div class="r" style="left:53px;top:523px;width:1283px;height:42px;background:#161616"></div>
<div class="r" style="left:53px;top:565px;width:1283px;height:1px;background:#2d2d2d"></div>
<div class="t" style="left:62.30px;top:538.86px;font-size:10.63px;color:#d8d8d8;font-weight:400;transform:scaleX(0.784);font-family:'Liberation Mono',monospace;-webkit-text-stroke:0.25px currentColor;">AV-A1346-0023</div>
<div class="t" style="left:192.00px;top:538.86px;font-size:10.63px;color:#d8d8d8;font-weight:400;transform:scaleX(0.784);font-family:'Liberation Mono',monospace;-webkit-text-stroke:0.25px currentColor;">Maintenance</div>
<div class="t" style="left:597.00px;top:538.86px;font-size:10.63px;color:#d8d8d8;font-weight:400;transform:scaleX(0.784);font-family:'Liberation Mono',monospace;-webkit-text-stroke:0.25px currentColor;">16-12-2025 10:12</div>
<div class="t" style="left:707.70px;top:538.86px;font-size:10.63px;color:#d8d8d8;font-weight:400;transform:scaleX(0.784);font-family:'Liberation Mono',monospace;-webkit-text-stroke:0.25px currentColor;">18-12-2025 08:32</div>
<div class="r" style="left:818px;top:533px;width:165px;height:23px;background:#441d1d"></div>
<div class="t" style="left:825.50px;top:541.14px;font-size:8.05px;color:#e8962a;font-weight:700;transform:scaleX(0.808);font-family:'Liberation Mono',monospace;">UNKNOWN</div>
<svg class="r" style="left:968px;top:541px;" width="8.8" height="7" viewBox="0 0 8.8 7"><path d="M1.1 1.3 L4.0 4.8 L6.9 1.3" fill="none" stroke="#e8962a" stroke-width="0.95"/></svg>
<div class="r" style="left:1002px;top:533px;width:119px;height:23px;background:#1c3a22"></div>
<div class="t" style="left:1009.60px;top:541.14px;font-size:8.05px;color:#e8962a;font-weight:700;transform:scaleX(0.808);font-family:'Liberation Mono',monospace;">REPAIRED</div>
<svg class="r" style="left:1106px;top:541px;" width="8.8" height="7" viewBox="0 0 8.8 7"><path d="M1.1 1.3 L4.0 4.8 L6.9 1.3" fill="none" stroke="#e8962a" stroke-width="0.95"/></svg>
<div class="r" style="left:1140px;top:537px;width:94px;height:15px;background:#17130f;border:1.5px solid #f7931a"></div>
<div class="t" style="left:1144.80px;top:539.36px;font-size:10.63px;color:#f7931a;font-weight:400;transform:scaleX(0.784);font-family:'Liberation Mono',monospace;-webkit-text-stroke:0.25px currentColor;">Actions</div>
<svg class="r" style="left:1222px;top:541px;" width="9.5" height="8" viewBox="0 0 9.5 8"><path d="M1.1 1.3 L4.35 5.3 L7.6 1.3" fill="none" stroke="#f7931a" stroke-width="1.0"/></svg>
<div class="t" style="left:1253.80px;top:538.86px;font-size:10.63px;color:#d8d8d8;font-weight:400;transform:scaleX(0.784);font-family:'Liberation Mono',monospace;-webkit-text-stroke:0.25px currentColor;">Pintado</div>
<div class="r" style="left:53px;top:566px;width:1283px;height:42px;background:#161616"></div>
<div class="t" style="left:62.30px;top:581.86px;font-size:10.63px;color:#d8d8d8;font-weight:400;transform:scaleX(0.784);font-family:'Liberation Mono',monospace;-webkit-text-stroke:0.25px currentColor;">AV-A1346-0022</div>
<div class="t" style="left:192.00px;top:581.86px;font-size:10.63px;color:#d8d8d8;font-weight:400;transform:scaleX(0.784);font-family:'Liberation Mono',monospace;-webkit-text-stroke:0.25px currentColor;">Bitdeer 4b A1346</div>
<div class="t" style="left:320.60px;top:581.86px;font-size:10.63px;color:#d8d8d8;font-weight:400;transform:scaleX(0.784);font-family:'Liberation Mono',monospace;-webkit-text-stroke:0.25px currentColor;">1-2_a2</div>
<div class="t" style="left:597.00px;top:581.86px;font-size:10.63px;color:#d8d8d8;font-weight:400;transform:scaleX(0.784);font-family:'Liberation Mono',monospace;-webkit-text-stroke:0.25px currentColor;">16-12-2025 10:12</div>
<div class="t" style="left:707.70px;top:581.86px;font-size:10.63px;color:#d8d8d8;font-weight:400;transform:scaleX(0.784);font-family:'Liberation Mono',monospace;-webkit-text-stroke:0.25px currentColor;">16-12-2025 10:12</div>
<div class="r" style="left:818px;top:576px;width:165px;height:23px;background:#441d1d"></div>
<div class="t" style="left:825.50px;top:584.14px;font-size:8.05px;color:#e8962a;font-weight:700;transform:scaleX(0.808);font-family:'Liberation Mono',monospace;">UNKNOWN</div>
<svg class="r" style="left:968px;top:584px;" width="8.8" height="7" viewBox="0 0 8.8 7"><path d="M1.1 1.3 L4.0 4.8 L6.9 1.3" fill="none" stroke="#e8962a" stroke-width="0.95"/></svg>
<div class="r" style="left:1002px;top:576px;width:119px;height:23px;background:#2f2b28"></div>
<div class="t" style="left:1009.60px;top:584.14px;font-size:8.05px;color:#e8962a;font-weight:700;transform:scaleX(0.808);font-family:'Liberation Mono',monospace;">UNKNOWN</div>
<svg class="r" style="left:1106px;top:584px;" width="8.8" height="7" viewBox="0 0 8.8 7"><path d="M1.1 1.3 L4.0 4.8 L6.9 1.3" fill="none" stroke="#e8962a" stroke-width="0.95"/></svg>
<div class="r" style="left:1140px;top:580px;width:94px;height:15px;background:#17130f;border:1.5px solid #f7931a"></div>
<div class="t" style="left:1144.80px;top:582.36px;font-size:10.63px;color:#f7931a;font-weight:400;transform:scaleX(0.784);font-family:'Liberation Mono',monospace;-webkit-text-stroke:0.25px currentColor;">Actions</div>
<svg class="r" style="left:1222px;top:584px;" width="9.5" height="8" viewBox="0 0 9.5 8"><path d="M1.1 1.3 L4.35 5.3 L7.6 1.3" fill="none" stroke="#f7931a" stroke-width="1.0"/></svg>
<div class="t" style="left:1253.80px;top:581.86px;font-size:10.63px;color:#d8d8d8;font-weight:400;transform:scaleX(0.784);font-family:'Liberation Mono',monospace;-webkit-text-stroke:0.25px currentColor;">Pintado</div>
<div class="r" style="left:1336px;top:180px;width:16px;height:430px;background:#333333"></div>
<svg class="r" style="left:1338px;top:184px;" width="11" height="8" viewBox="0 0 11 8"><path d="M0.7 6.8 L5.5 1.6 L10.3 6.8 Z" fill="#6a6a6a"/></svg>
<svg class="r" style="left:1338px;top:596px;" width="11" height="8" viewBox="0 0 11 8"><path d="M0.7 1 L5.5 6.2 L10.3 1 Z" fill="#6a6a6a"/></svg>
<div class="r" style="left:818px;top:212px;width:165px;height:161px;background:#141414"></div>
<div class="r" style="left:819px;top:209px;width:153px;height:167.6px;background:#17130f;border:3px solid #f5a000;border-radius:5px"></div>
<div class="t" style="left:827.30px;top:221.16px;font-size:10.63px;color:#9a9a9a;font-weight:400;transform:scaleX(0.784);font-family:'Liberation Mono',monospace;-webkit-text-stroke:0.25px currentColor;">Location</div>
<div class="t" style="left:832.30px;top:240.36px;font-size:10.63px;color:#d4d4d4;font-weight:400;transform:scaleX(0.784);font-family:'Liberation Mono',monospace;-webkit-text-stroke:0.15px currentColor;">Workshop Warehouse</div>
<div class="t" style="left:832.30px;top:259.26px;font-size:10.63px;color:#d4d4d4;font-weight:400;transform:scaleX(0.784);font-family:'Liberation Mono',monospace;-webkit-text-stroke:0.15px currentColor;">Workshop Lab</div>
<div class="t" style="left:832.30px;top:278.06px;font-size:10.63px;color:#d4d4d4;font-weight:400;transform:scaleX(0.784);font-family:'Liberation Mono',monospace;-webkit-text-stroke:0.15px currentColor;">Site Warehouse</div>
<div class="t" style="left:832.30px;top:297.06px;font-size:10.63px;color:#d4d4d4;font-weight:400;transform:scaleX(0.784);font-family:'Liberation Mono',monospace;-webkit-text-stroke:0.15px currentColor;">Site Lab</div>
<div class="t" style="left:832.30px;top:317.16px;font-size:10.63px;color:#d4d4d4;font-weight:400;transform:scaleX(0.784);font-family:'Liberation Mono',monospace;-webkit-text-stroke:0.15px currentColor;">Disposed</div>
<div class="t" style="left:832.30px;top:336.36px;font-size:10.63px;color:#d4d4d4;font-weight:400;transform:scaleX(0.784);font-family:'Liberation Mono',monospace;-webkit-text-stroke:0.15px currentColor;">Vendor</div>
<div class="t" style="left:832.30px;top:355.26px;font-size:10.63px;color:#d4d4d4;font-weight:400;transform:scaleX(0.784);font-family:'Liberation Mono',monospace;-webkit-text-stroke:0.15px currentColor;">Unknown</div>
<svg class="r" style="left:977px;top:222px;" width="27" height="27" viewBox="0 0 27 27"><circle cx="13.3" cy="13.4" r="12.4" fill="#f5a000"/></svg>
<div class="t" style="left:985.20px;top:229.13px;font-size:13.66px;color:#ffffff;font-weight:700;transform:scaleX(0.880);font-family:'Liberation Sans',sans-serif;">L</div>
<div class="r" style="left:1060px;top:620px;width:19px;height:19px;border:1px solid #3a3a3a"></div>
<svg class="r" style="left:1066px;top:625px;" width="8" height="9" viewBox="0 0 8 9"><path d="M6 1 L2 4.5 L6 8" fill="none" stroke="#555" stroke-width="1"/></svg>
<div class="r" style="left:1084px;top:620px;width:19px;height:19px;background:#3c2a12"></div>
<div class="t" style="left:1091.40px;top:624.86px;font-size:10.63px;color:#f7931a;font-weight:400;transform:scaleX(0.784);font-family:'Liberation Mono',monospace;-webkit-text-stroke:0.25px currentColor;">1</div>
<div class="r" style="left:1108px;top:620px;width:19px;height:19px;border:1px solid #3a3a3a"></div>
<div class="t" style="left:1115.40px;top:624.86px;font-size:10.63px;color:#f7931a;font-weight:400;transform:scaleX(0.784);font-family:'Liberation Mono',monospace;-webkit-text-stroke:0.25px currentColor;">2</div>
<div class="r" style="left:1132px;top:620px;width:19px;height:19px;border:1px solid #3a3a3a"></div>
<div class="t" style="left:1139.40px;top:624.86px;font-size:10.63px;color:#f7931a;font-weight:400;transform:scaleX(0.784);font-family:'Liberation Mono',monospace;-webkit-text-stroke:0.25px currentColor;">3</div>
<div class="r" style="left:1156px;top:620px;width:19px;height:19px;border:1px solid #3a3a3a"></div>
<div class="t" style="left:1163.40px;top:624.86px;font-size:10.63px;color:#f7931a;font-weight:400;transform:scaleX(0.784);font-family:'Liberation Mono',monospace;-webkit-text-stroke:0.25px currentColor;">4</div>
<div class="r" style="left:1180px;top:620px;width:19px;height:19px;border:1px solid #3a3a3a"></div>
<div class="t" style="left:1187.40px;top:624.86px;font-size:10.63px;color:#f7931a;font-weight:400;transform:scaleX(0.784);font-family:'Liberation Mono',monospace;-webkit-text-stroke:0.25px currentColor;">5</div>
<div class="r" style="left:1228px;top:620px;width:19px;height:19px;border:1px solid #3a3a3a"></div>
<div class="t" style="left:1232.90px;top:624.86px;font-size:10.63px;color:#f7931a;font-weight:400;transform:scaleX(0.784);font-family:'Liberation Mono',monospace;-webkit-text-stroke:0.25px currentColor;">10</div>
<div class="r" style="left:1252px;top:620px;width:19px;height:19px;border:1px solid #3a3a3a"></div>
<svg class="r" style="left:1258px;top:625px;" width="8" height="9" viewBox="0 0 8 9"><path d="M2 1 L6 4.5 L2 8" fill="none" stroke="#cfcfcf" stroke-width="1"/></svg>
<div class="r" style="left:1207px;top:629px;width:2px;height:2px;background:#5a5a5a"></div>
<div class="r" style="left:1213px;top:629px;width:2px;height:2px;background:#5a5a5a"></div>
<div class="r" style="left:1219px;top:629px;width:2px;height:2px;background:#5a5a5a"></div>
<div class="r" style="left:1281px;top:620px;width:71px;height:19px;border:1px solid #3a3a3a"></div>
<div class="t" style="left:1288.50px;top:624.86px;font-size:10.63px;color:#d8d8d8;font-weight:400;transform:scaleX(0.784);font-family:'Liberation Mono',monospace;-webkit-text-stroke:0.25px currentColor;">10 / page</div>
<svg class="r" style="left:1337px;top:624px;" width="9" height="8" viewBox="0 0 9 8"><path d="M1 2 L4.5 6 L8 2" fill="none" stroke="#555" stroke-width="1"/></svg>
</body></html>
